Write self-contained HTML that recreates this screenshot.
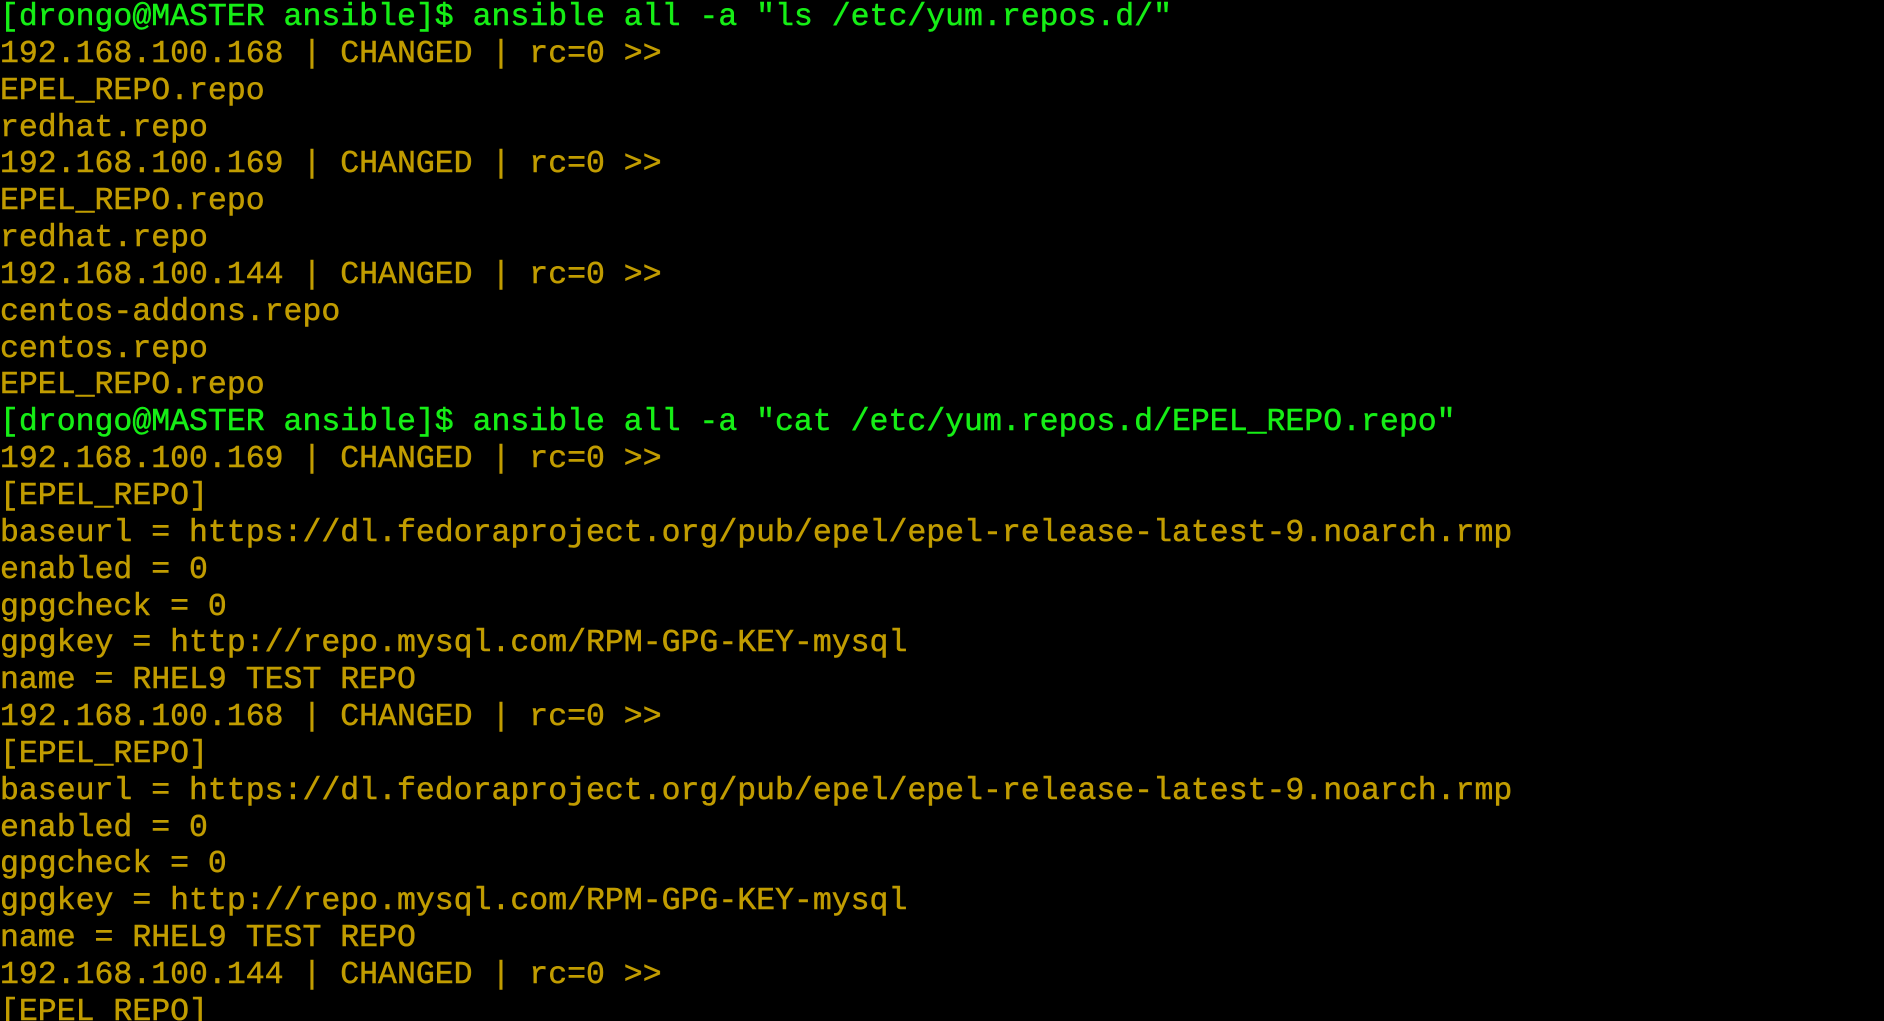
<!DOCTYPE html>
<html><head><meta charset="utf-8"><style>
html,body{margin:0;padding:0;background:#000;width:1884px;height:1021px;overflow:hidden}
pre{margin:0;padding:0;font-family:"Liberation Mono",monospace;font-size:31.5px;line-height:36.85px;color:#c19c00;white-space:pre;-webkit-text-stroke:0.5px currentColor}
.g{color:#16ee16}
</style></head><body><pre><span class="g">[drongo@MASTER ansible]$ ansible all -a "ls /etc/yum.repos.d/"</span>
192.168.100.168 | CHANGED | rc=0 &gt;&gt;
EPEL_REPO.repo
redhat.repo
192.168.100.169 | CHANGED | rc=0 &gt;&gt;
EPEL_REPO.repo
redhat.repo
192.168.100.144 | CHANGED | rc=0 &gt;&gt;
centos-addons.repo
centos.repo
EPEL_REPO.repo
<span class="g">[drongo@MASTER ansible]$ ansible all -a "cat /etc/yum.repos.d/EPEL_REPO.repo"</span>
192.168.100.169 | CHANGED | rc=0 &gt;&gt;
[EPEL_REPO]
baseurl = https://dl.fedoraproject.org/pub/epel/epel-release-latest-9.noarch.rmp
enabled = 0
gpgcheck = 0
gpgkey = http://repo.mysql.com/RPM-GPG-KEY-mysql
name = RHEL9 TEST REPO
192.168.100.168 | CHANGED | rc=0 &gt;&gt;
[EPEL_REPO]
baseurl = https://dl.fedoraproject.org/pub/epel/epel-release-latest-9.noarch.rmp
enabled = 0
gpgcheck = 0
gpgkey = http://repo.mysql.com/RPM-GPG-KEY-mysql
name = RHEL9 TEST REPO
192.168.100.144 | CHANGED | rc=0 &gt;&gt;
[EPEL_REPO]</pre></body></html>
